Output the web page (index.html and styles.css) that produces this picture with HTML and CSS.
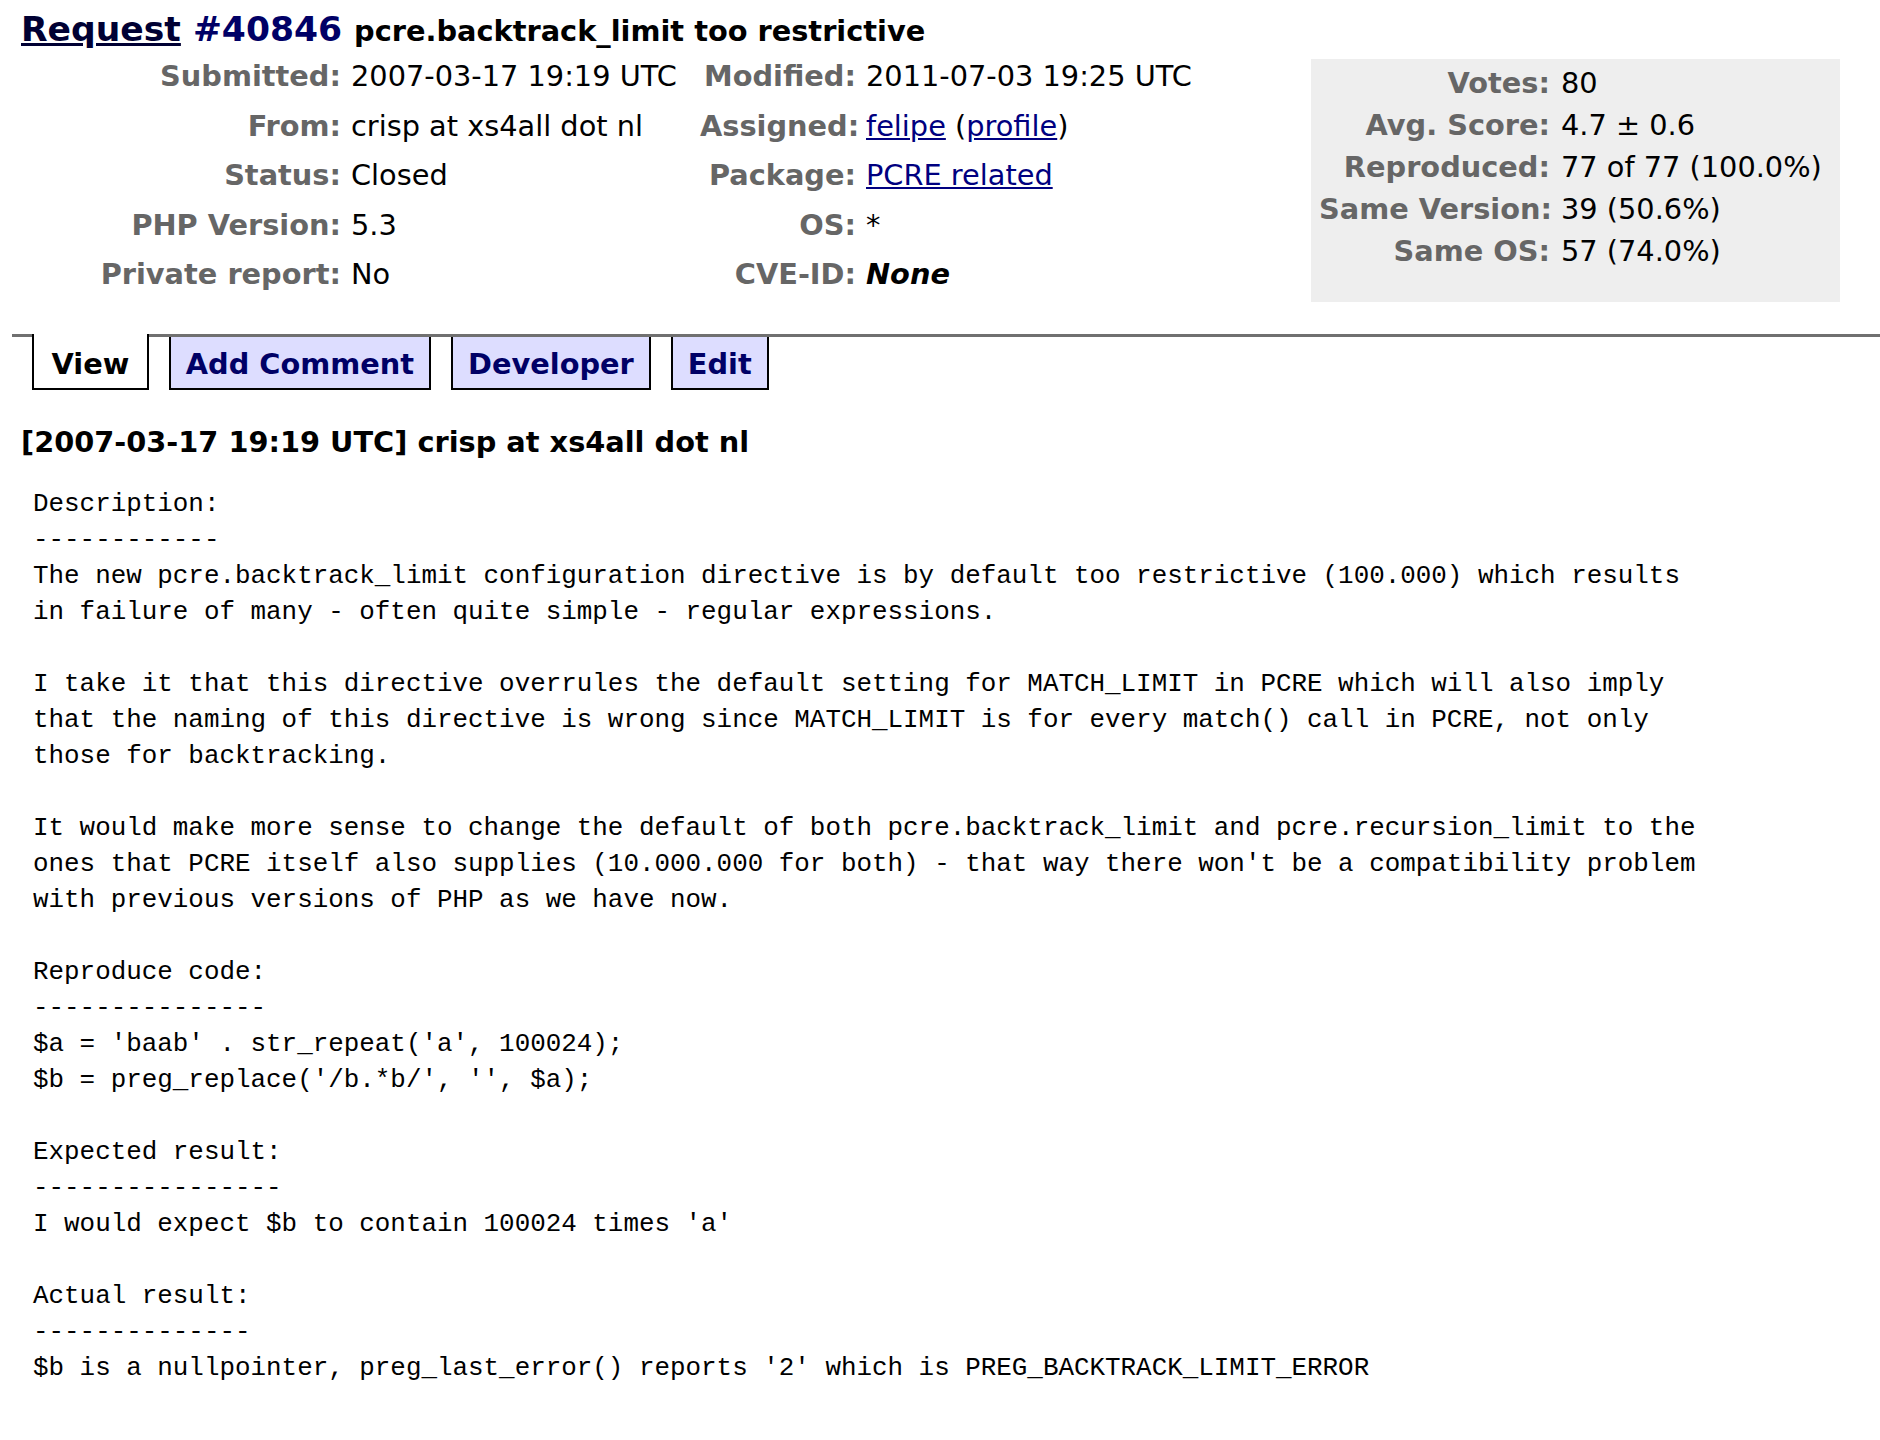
FILE: index.html
```
<!DOCTYPE html>
<html lang="en">
<head>
<meta charset="utf-8">
<title>Request #40846 :: pcre.backtrack_limit too restrictive</title>
<link rel="stylesheet" href="styles.css">
</head>
<body>
<h1 class="title"><a class="title-link" href="#">Request</a> <span class="bug-id">#40846</span> <span class="summary">pcre.backtrack_limit too restrictive</span></h1>

<div class="header">
  <div class="details">
    <div class="label">Submitted:</div><div class="value">2007-03-17 19:19 UTC</div>
    <div class="label">Modified:</div><div class="value">2011-07-03 19:25 UTC</div>

    <div class="label">From:</div><div class="value">crisp at xs4all dot nl</div>
    <div class="label">Assigned:</div><div class="value"><a href="#">felipe</a> (<a href="#">profile</a>)</div>

    <div class="label">Status:</div><div class="value">Closed</div>
    <div class="label">Package:</div><div class="value"><a href="#">PCRE related</a></div>

    <div class="label">PHP Version:</div><div class="value">5.3</div>
    <div class="label">OS:</div><div class="value">*</div>

    <div class="label">Private report:</div><div class="value">No</div>
    <div class="label">CVE-ID:</div><div class="value"><em class="none">None</em></div>
  </div>

  <div class="votes">
    <div class="label">Votes:</div><div class="value">80</div>
    <div class="label">Avg. Score:</div><div class="value">4.7 ± 0.6</div>
    <div class="label">Reproduced:</div><div class="value">77 of 77 (100.0%)</div>
    <div class="label">Same Version:</div><div class="value">39 (50.6%)</div>
    <div class="label">Same OS:</div><div class="value">57 (74.0%)</div>
  </div>
</div>

<div class="controls">
  <span class="tab active">View</span>
  <a class="tab" href="#">Add Comment</a>
  <a class="tab" href="#">Developer</a>
  <a class="tab" href="#">Edit</a>
</div>

<div class="comment">
  <h2 class="comment-head">[2007-03-17 19:19 UTC] crisp at xs4all dot nl</h2>
  <pre class="note">Description:
------------
The new pcre.backtrack_limit configuration directive is by default too restrictive (100.000) which results
in failure of many - often quite simple - regular expressions.

I take it that this directive overrules the default setting for MATCH_LIMIT in PCRE which will also imply
that the naming of this directive is wrong since MATCH_LIMIT is for every match() call in PCRE, not only
those for backtracking.

It would make more sense to change the default of both pcre.backtrack_limit and pcre.recursion_limit to the
ones that PCRE itself also supplies (10.000.000 for both) - that way there won't be a compatibility problem
with previous versions of PHP as we have now.

Reproduce code:
---------------
$a = 'baab' . str_repeat('a', 100024);
$b = preg_replace('/b.*b/', '', $a);

Expected result:
----------------
I would expect $b to contain 100024 times 'a'

Actual result:
--------------
$b is a nullpointer, preg_last_error() reports '2' which is PREG_BACKTRACK_LIMIT_ERROR</pre>
</div>
</body>
</html>
```

FILE: styles.css
```
html, body {
  margin: 0;
  padding: 0;
  background: #ffffff;
}

body {
  font-family: "DejaVu Sans", Verdana, sans-serif;
  font-size: 28.8px;
  color: #000000;
}

a {
  color: #000080;
}

.title {
  margin: 9px 0 0 21px;
  font-size: 34.56px;
  line-height: 40px;
  font-weight: bold;
  white-space: nowrap;
}

.title-link {
  color: #000033;
  text-decoration: underline;
}

.bug-id {
  color: #000066;
}

.summary {
  font-size: 28.8px;
  color: #000000;
}

.header {
  display: flex;
  align-items: flex-start;
}

.details {
  display: grid;
  grid-template-columns: 241px 339px 156px auto;
  grid-auto-rows: 49.5px;
  column-gap: 10px;
  margin: 1px 0 0 100px;
  line-height: 49.5px;
  white-space: nowrap;
}

.label {
  text-align: right;
  font-weight: bold;
  color: #666666;
}

.value {
  text-align: left;
}

.none {
  font-weight: bold;
  font-style: italic;
}

.votes {
  box-sizing: border-box;
  width: 529px;
  margin: 8px 40px 0 auto;
  padding: 3px 8px 30px;
  background: #eeeeee;
  display: grid;
  grid-template-columns: 231px 1fr;
  grid-auto-rows: 42px;
  column-gap: 11px;
  line-height: 42px;
  white-space: nowrap;
}

.controls {
  display: flex;
  align-items: flex-start;
  gap: 20px;
  margin: 32px 0 0 12px;
  padding-left: 20px;
  border-top: 3px solid #707070;
}

.tab {
  display: block;
  padding: 4px 15px 0;
  line-height: 47px;
  font-size: 28.8px;
  font-weight: bold;
  color: #000066;
  text-decoration: none;
  background: #ddddff;
  border: 2px solid #000000;
  border-top: 0;
}

.tab.active {
  margin-top: -3px;
  padding: 7px 17.5px 0;
  background: #ffffff;
  color: #000000;
}

.comment {
  margin: 0;
}

.comment-head {
  margin: 32px 0 0 21px;
  font-size: 28.8px;
  line-height: 40px;
  font-weight: bold;
}

.note {
  margin: 24px 0 0 33px;
  font-family: "Liberation Mono", "Courier New", monospace;
  font-size: 25.9px;
  line-height: 36px;
  white-space: pre;
}
```
